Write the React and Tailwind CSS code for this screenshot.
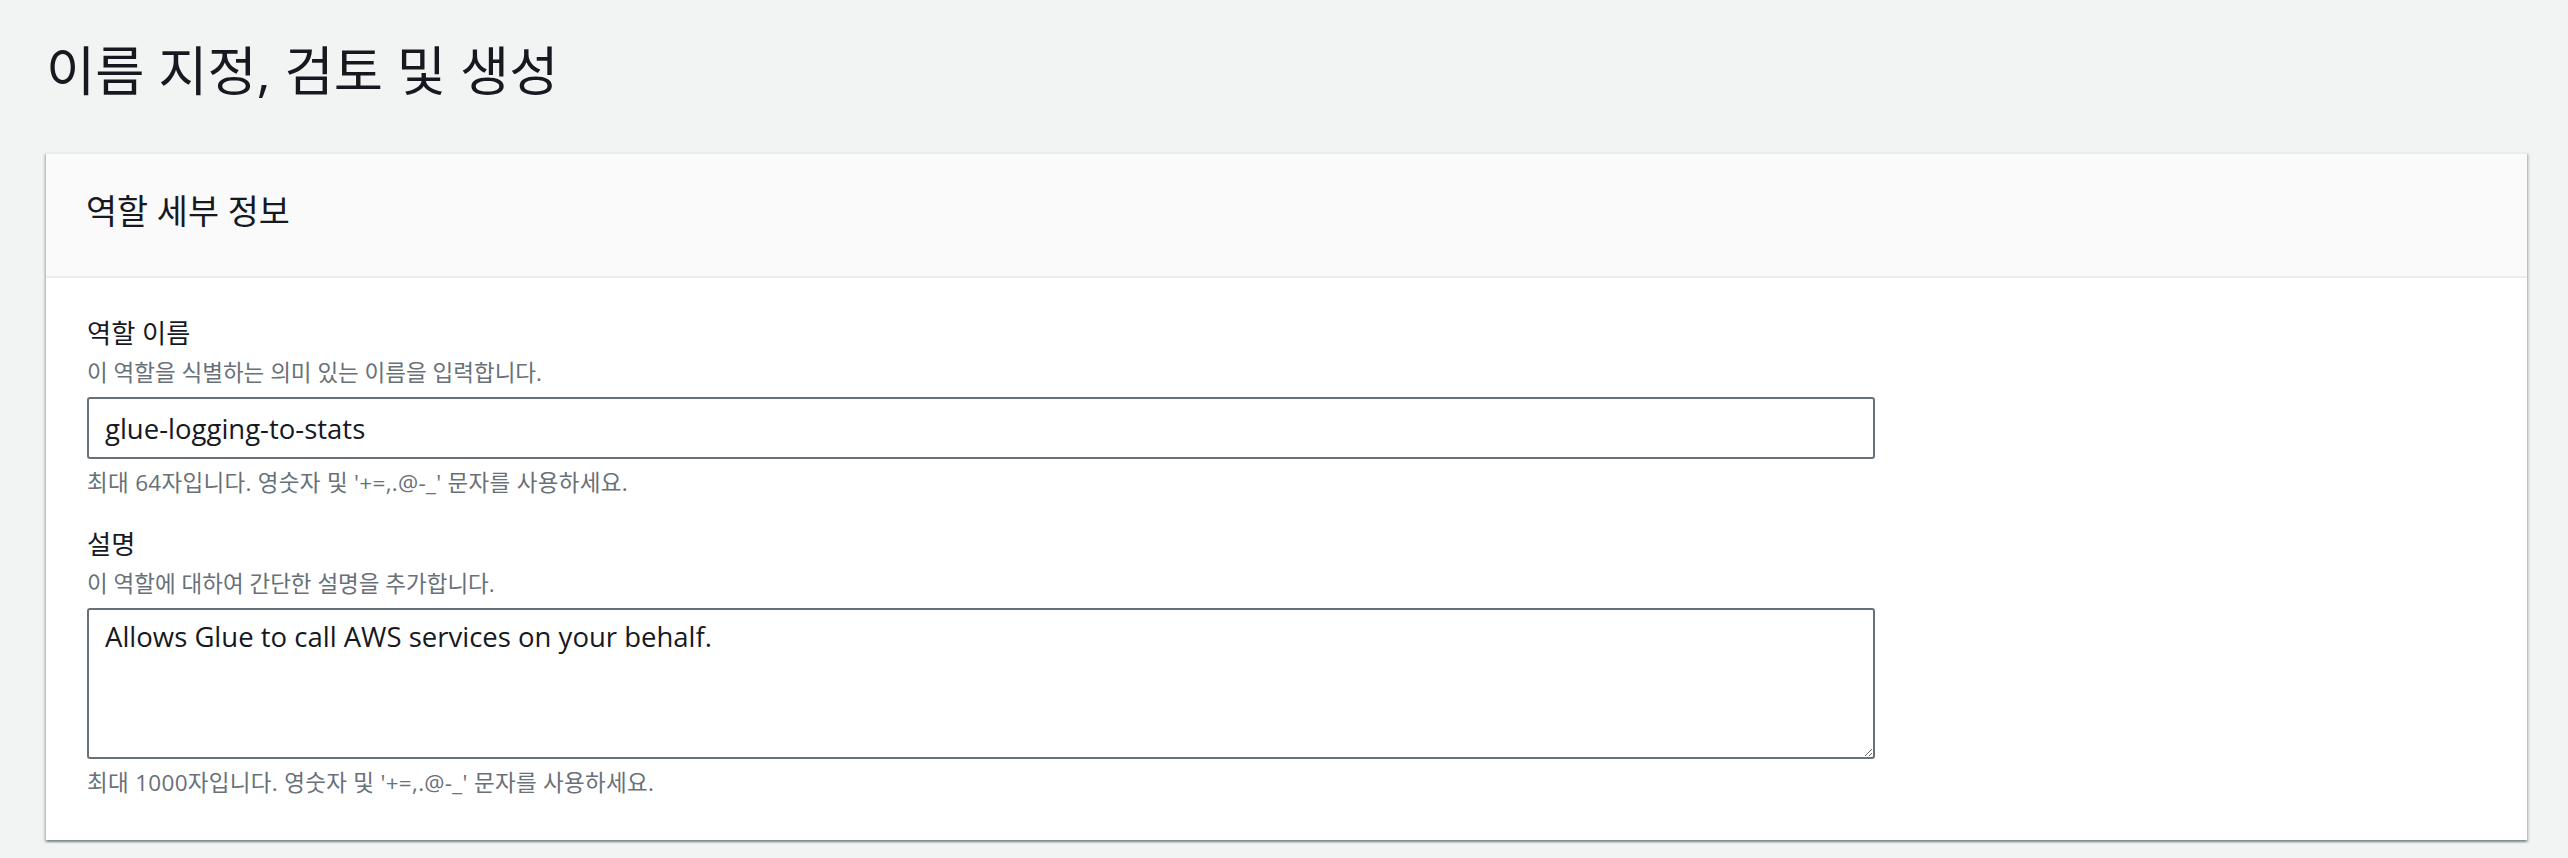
const font = { fontFamily: '"Open Sans", "Noto Sans CJK KR", sans-serif' };

const Field = ({ label, description, hint, children, first }) => (
    <div className={first ? '' : 'mt-[31px]'}>
        <div className="text-[26.25px] leading-[30px] text-[#16191f]">{label}</div>
        <div className="mt-[10px] text-[22.5px] leading-[30px] text-[#687078]">{description}</div>
        <div className="mt-[9px]">{children}</div>
        <div className="mt-[9px] text-[22.5px] leading-[30px] tracking-[0.3px] text-[#687078]">{hint}</div>
    </div>
);

export default function App() {
    return (
        <div className="min-h-[858px] bg-[#f2f3f3] pl-[46px] pr-[41px] pt-[41px]" style={font}>
            <h1 className="text-[53.5px] leading-[60px] font-normal text-[#16191f]">이름 지정, 검토 및 생성</h1>

            {/* Card */}
            <div className="mt-[51px] bg-white border-t-2 border-[#eaeded] shadow-[0_2px_2px_0_rgba(0,28,36,0.3),2px_2px_2px_0_rgba(0,28,36,0.15),-2px_2px_2px_0_rgba(0,28,36,0.15)]">
                <div className="bg-[#fafafa] border-b-2 border-[#eaeded] pl-[40px] pt-[37px] pb-[45px]">
                    <h2 className="text-[33.75px] leading-[40px] font-normal text-[#16191f]">역할 세부 정보</h2>
                </div>

                <div className="pl-[41px] pt-[40px] pb-[42px]">
                    <Field
                        first
                        label="역할 이름"
                        description="이 역할을 식별하는 의미 있는 이름을 입력합니다."
                        hint="최대 64자입니다. 영숫자 및 '+=,.@-_' 문자를 사용하세요."
                    >
                        <input
                            readOnly
                            value="glue-logging-to-stats"
                            className="block w-[1788px] h-[62px] border-2 border-[#687078] rounded-[3px] bg-white px-[16px] text-[27.5px] text-[#16191f] outline-none"
                            style={font}
                        />
                    </Field>

                    <Field
                        label="설명"
                        description="이 역할에 대하여 간단한 설명을 추가합니다."
                        hint="최대 1000자입니다. 영숫자 및 '+=,.@-_' 문자를 사용하세요."
                    >
                        <textarea
                            readOnly
                            defaultValue="Allows Glue to call AWS services on your behalf."
                            className="block w-[1788px] h-[151px] border-2 border-[#687078] rounded-[3px] bg-white px-[16px] pt-[9px] text-[27.5px] leading-[36px] text-[#16191f] outline-none"
                            style={font}
                        />
                    </Field>
                </div>
            </div>
        </div>
    );
}
